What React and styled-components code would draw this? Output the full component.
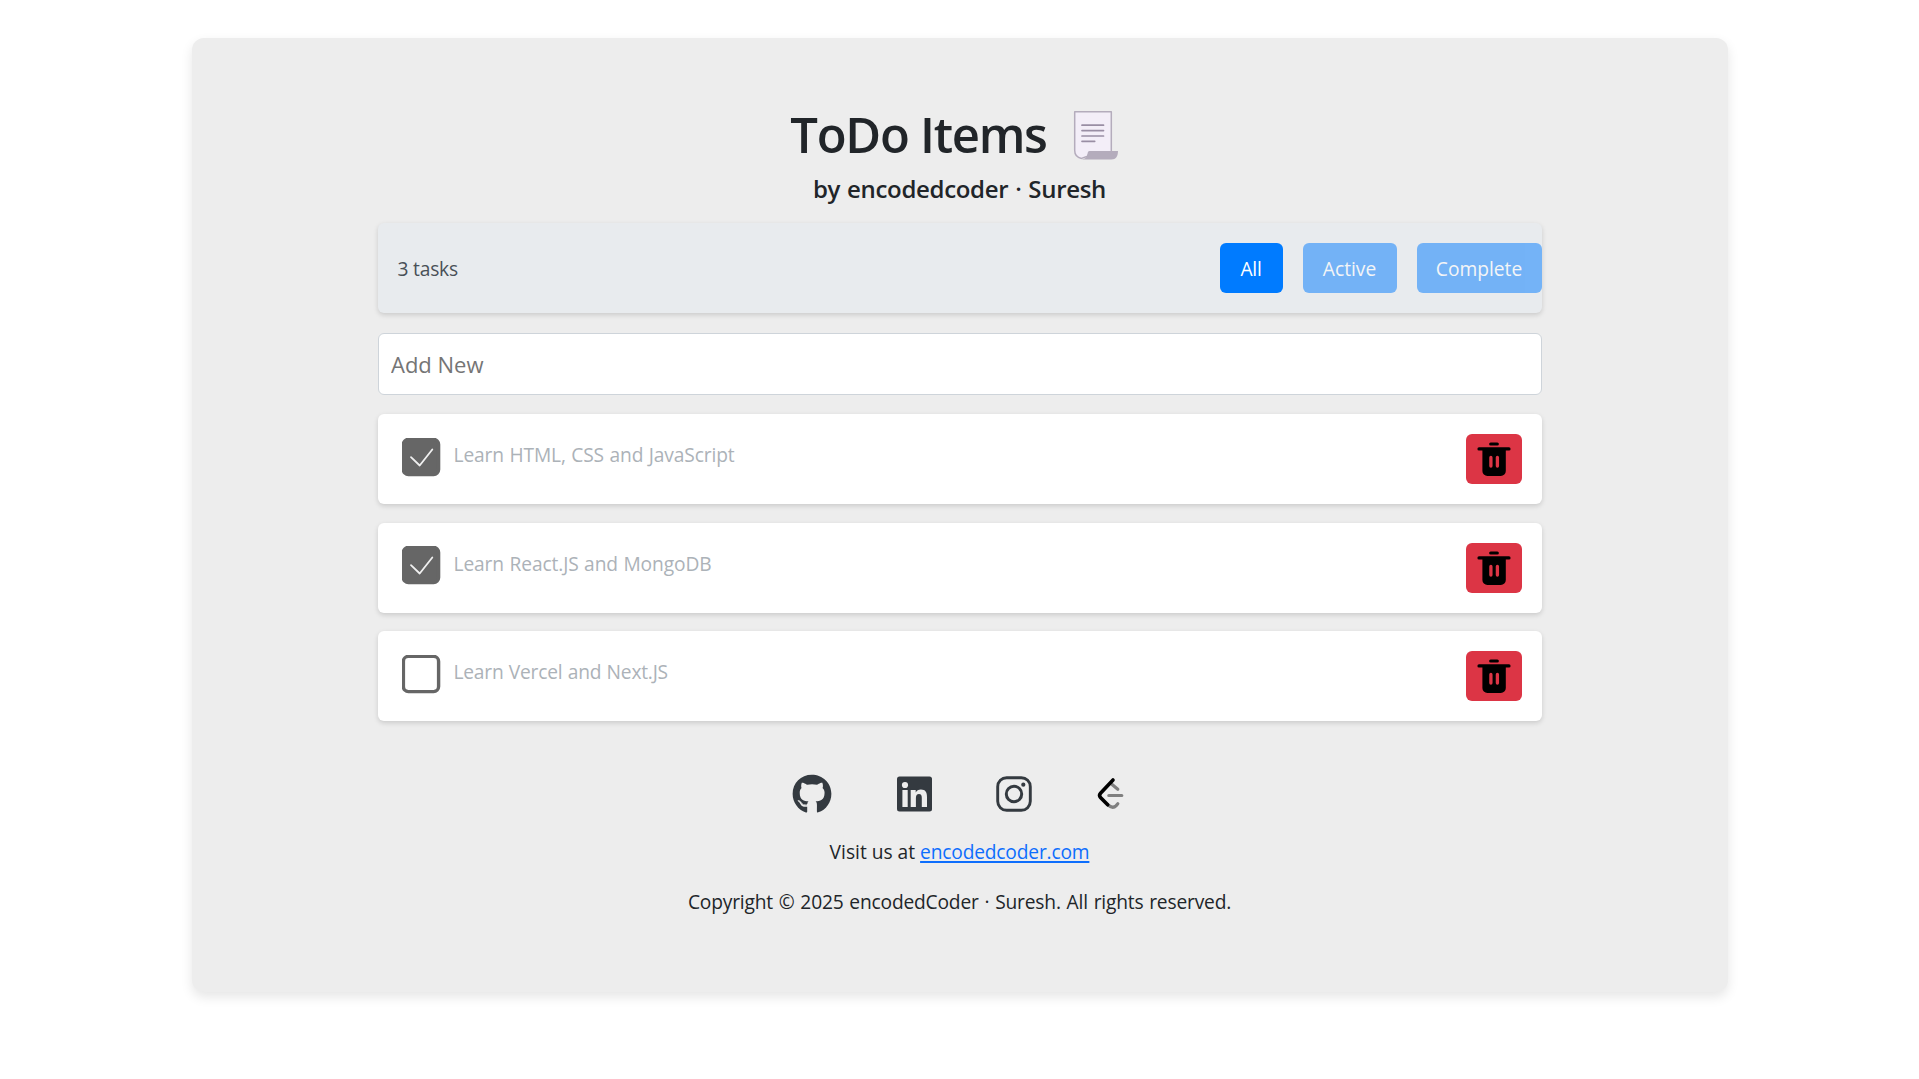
import React, { useState } from "react";
import styled, { createGlobalStyle } from "styled-components";
import { FaGithub } from "react-icons/fa";

const GlobalStyle = createGlobalStyle`
  * { box-sizing: border-box; }
  body {
    margin: 0;
    background: #fff;
    color: #212529;
    font-family: "Open Sans", "Noto Sans", sans-serif;
    font-size: 19.2px;
  }
`;

const Page = styled.main`
  display: flex;
  align-items: flex-start;
  justify-content: center;
  min-height: 100vh;
  padding-top: 38px;
`;

const Card = styled.section`
  display: flex;
  flex-direction: column;
  align-items: center;
  width: 1536px;
  height: 954px;
  padding: 65px 186px 0;
  border-radius: 12px;
  background: #ededed;
  box-shadow: 0 5px 12px rgba(0, 0, 0, 0.1);
`;

const Title = styled.h1`
  display: flex;
  align-items: center;
  gap: 26px;
  height: 62px;
  margin: 0 10px 0 0;
  font-size: 49px;
  font-weight: 600;
  letter-spacing: ${(p) => p.$track}px;
  white-space: nowrap;
  svg { margin-top: 2px; }
`;

const Subtitle = styled.h2`
  height: 30px;
  margin: 9px 0 19px;
  font-size: 24px;
  line-height: 30px;
  font-weight: 600;
  letter-spacing: ${(p) => p.$track}px;
  word-spacing: 1px;
  white-space: nowrap;
`;

const Toolbar = styled.div`
  display: flex;
  align-items: center;
  justify-content: space-between;
  width: 100%;
  height: 90px;
  padding-left: 20px;
  border-radius: 6px;
  background: #e8ebee;
  box-shadow: 0 2px 5px rgba(0, 0, 0, 0.15);
`;

const Count = styled.span`
  color: #495057;
  letter-spacing: ${(p) => p.$track}px;
`;

const Filters = styled.div`
  display: flex;
  gap: 20px;
`;

const FilterButton = styled.button`
  width: ${(p) => p.$width}px;
  height: 50px;
  padding: 0;
  border: 0;
  border-radius: 6px;
  background: #007bff;
  color: #fff;
  font: inherit;
  letter-spacing: ${(p) => p.$track}px;
  opacity: ${(p) => (p.$active ? 1 : 0.5)};
`;

const NewItem = styled.input`
  width: 100%;
  height: 62px;
  margin: 20px 0 19px;
  padding: 0 12.5px;
  border: 1px solid #ced4da;
  border-radius: 6px;
  background: #fff;
  font: inherit;
  font-size: 22px;
  letter-spacing: 0;
  outline: 0;
  &::placeholder { color: #757575; opacity: 1; }
`;

const List = styled.ul`
  display: flex;
  flex-direction: column;
  gap: 18.5px;
  width: 100%;
  margin: 0;
  padding: 0;
  list-style: none;
`;

const Row = styled.li`
  display: flex;
  align-items: flex-start;
  height: 90px;
  padding: 20px 20px 0 24px;
  border-radius: 6px;
  background: #fff;
  box-shadow: 0 2px 5px rgba(0, 0, 0, 0.15);
`;

const Check = styled.button`
  width: 39px;
  height: 39px;
  margin-top: 3.5px;
  padding: 0;
  border: 0;
  background: none;
  svg { display: block; }
`;

const Label = styled.span`
  flex: 1;
  padding-left: 13px;
  line-height: 42px;
  color: #acb2b8;
  letter-spacing: ${(p) => p.$track}px;
  word-spacing: 0.6px;
`;

const DeleteButton = styled.button`
  width: 56px;
  height: 50px;
  padding: 0;
  border: 0;
  border-radius: 6px;
  background: #dc3545;
  svg { display: block; }
`;

const Social = styled.nav`
  display: flex;
  justify-content: center;
  gap: 52px;
  height: 48px;
  margin: 49px 4px 0 0;
  color: #343a40;
`;

const SocialLink = styled.a`
  display: flex;
  align-items: center;
  justify-content: center;
  width: ${(p) => p.$width}px;
  color: inherit;
`;

const FooterLine = styled.p`
  height: 30px;
  margin: ${(p) => p.$top}px 0 0;
  line-height: 30px;
  letter-spacing: ${(p) => p.$track}px;
  word-spacing: ${(p) => p.$wordGap || 0}px;
  white-space: nowrap;
`;

const SiteLink = styled.a`
  color: #0d6efd;
  letter-spacing: -0.18px;
  text-decoration: underline;
  text-decoration-thickness: 2px;
  text-underline-offset: 2px;
  text-decoration-skip-ink: none;
`;

const Scroll = () => (
  <svg width="46" height="50" viewBox="0 0 46 50" fill="none">
    <path d="M1.7 1.7h36.6v40H16.5l-2 4.5-6 2.2C4 47.500 1.700 44.500 1.700 40.500z" fill="#f3eef8" stroke="#b4acbc" strokeWidth="1.500" strokeLinejoin="round" />
    <path d="M17 41h28c0 5-2 8.500-6.500 8.500H8.500C12.500 49 14.500 46.500 14.700 43c0-1.300 1-2 2.300-2z" fill="#b4acbc" />
    <path d="M9 15.200h21.500M9 20.600h21.500M9 26h21.500M9 31.300h12.700" stroke="#998ea4" strokeWidth="1.700" strokeLinecap="round" />
  </svg>
);

const CheckIcon = ({ done }) => (
  <svg width="39" height="39" viewBox="0.500 0.500 39 39" fill="none">
    <rect x="1.900" y="1.900" width="35.200" height="35.200" rx="5" stroke="#666" strokeWidth="3.400" fill={done ? "#666" : "#fff"} />
    {done && <path d="M9.500 19.700l8.700 8.300 12.600-16" stroke="#f0f0f0" strokeWidth="1.800" strokeLinecap="round" strokeLinejoin="round" />}
  </svg>
);

const TrashIcon = () => (
  <svg width="56" height="50" viewBox="0 0 56 50">
    <path d="M24.700 8.400h6.600a1.600 1.600 0 010 3.200h-6.600a1.600 1.600 0 010-3.200zM13 13.300h30a1.600 1.600 0 010 3.200h-3.200V37a5 5 0 01-5 5H21.400a5 5 0 01-5-5V16.500H13a1.600 1.600 0 010-3.200z" fill="#000" />
    <path d="M24.900 23.500v8.500M31.400 23.500v8.500" stroke="#dc3545" strokeWidth="3.300" strokeLinecap="round" />
  </svg>
);

const LinkedIn = () => (
  <svg width="35" height="36" viewBox="0 0 35 36">
    <rect y=".5" width="35" height="35" rx="2.500" fill="#343a40" />
    <circle cx="8" cy="9" r="3.100" fill="#ededed" />
    <path d="M5.400 14h5.300v17H5.400zM13.700 14h5v2.400c1-1.700 2.800-2.800 5.200-2.800 4.500 0 6.100 2.700 6.100 7.400v10h-5.200v-9c0-2.600-.7-4.100-2.800-4.100-2.200 0-3.100 1.600-3.100 4.100v9h-5.200z" fill="#ededed" />
  </svg>
);

const Instagram = () => (
  <svg width="36" height="36" viewBox="0 0 36 36" fill="none" stroke="#343a40">
    <rect x="1.700" y="1.700" width="32.600" height="32.600" rx="9" strokeWidth="2.900" />
    <circle cx="18" cy="18" r="7.700" strokeWidth="3" />
    <circle cx="27.300" cy="8.700" r="2.100" fill="#343a40" stroke="none" />
  </svg>
);

const LeetCode = () => (
  <svg width="39" height="48" viewBox="4.500 1 39 48" fill="none" strokeLinecap="round">
    <path d="M26 15l6.300 5.300M23.300 26.500h13M22.700 36c3.500 3.300 6.300 2.300 8 .6l1.600-1.900" stroke="#808080" strokeWidth="3.200" />
    <path d="M27.500 11L15 24.300c-1.300 1.500-1.300 2.800 0 4.300l7.200 7.200" stroke="#000" strokeWidth="3.600" />
  </svg>
);

const tasks = [
  { text: "Learn HTML, CSS and JavaScript", done: true, track: -0.12 },
  { text: "Learn React.JS and MongoDB", done: true, track: -0.11 },
  { text: "Learn Vercel and Next.JS", done: false, track: -0.22 },
];

const filters = [
  { name: "All", width: 63, track: -0.2 },
  { name: "Active", width: 94, track: 0 },
  { name: "Complete", width: 125, track: 0 },
];

export default function App() {
  const [filter, setFilter] = useState("All");
  return (
    <>
      <GlobalStyle />
      <Page>
        <Card>
          <Title $track={-1.3}>
            <span>ToDo Items</span>
            <Scroll />
          </Title>
          <Subtitle $track={-0.32}>by encodedcoder · Suresh</Subtitle>
          <Toolbar>
            <Count $track={-0.2}>3 tasks</Count>
            <Filters>
              {filters.map((f) => (
                <FilterButton key={f.name} $width={f.width} $track={f.track} $active={f.name === filter} onClick={() => setFilter(f.name)}>
                  {f.name}
                </FilterButton>
              ))}
            </Filters>
          </Toolbar>
          <NewItem placeholder="Add New" />
          <List>
            {tasks.map((t) => (
              <Row key={t.text}>
                <Check aria-label="Toggle"><CheckIcon done={t.done} /></Check>
                <Label $track={t.track}>{t.text}</Label>
                <DeleteButton aria-label="Delete"><TrashIcon /></DeleteButton>
              </Row>
            ))}
          </List>
          <Social>
            <SocialLink $width={52} href="#github"><FaGithub size={40} /></SocialLink>
            <SocialLink $width={48} href="#linkedin"><LinkedIn /></SocialLink>
            <SocialLink $width={48} href="#instagram"><Instagram /></SocialLink>
            <SocialLink $width={39} href="#leetcode"><LeetCode /></SocialLink>
          </Social>
          <FooterLine $top={19} $track={0}>
            Visit us at <SiteLink href="#site">encodedcoder.com</SiteLink>
          </FooterLine>
          <FooterLine $top={20} $track={-0.18} $wordGap={1}>Copyright © 2025 encodedCoder · Suresh. All rights reserved.</FooterLine>
        </Card>
      </Page>
    </>
  );
}
